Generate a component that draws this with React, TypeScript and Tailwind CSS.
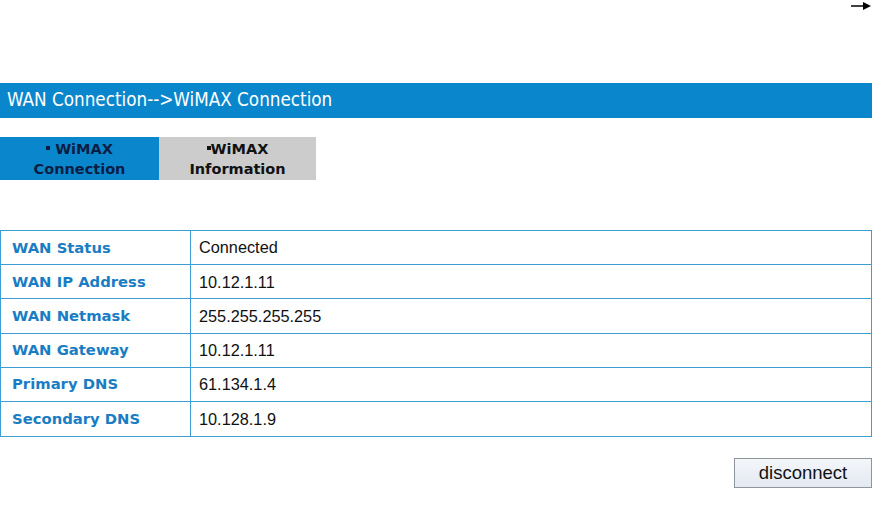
import React from 'react';

const ROWS: [string, string][] = [
  ['WAN Status', 'Connected'],
  ['WAN IP Address', '10.12.1.11'],
  ['WAN Netmask', '255.255.255.255'],
  ['WAN Gateway', '10.12.1.11'],
  ['Primary DNS', '61.134.1.4'],
  ['Secondary DNS', '10.128.1.9'],
];

export default function App() {
  return (
    <div className="w-[888px] h-[510px] bg-white relative overflow-hidden">
      {/* little arrow top-right */}
      <svg className="absolute left-[850px] top-0" width="24" height="12" viewBox="0 0 24 12">
        <line x1="1" y1="6" x2="15" y2="6" stroke="#000" strokeWidth="1.5" />
        <polygon points="13,2 21,6 13,10" fill="#000" />
      </svg>

      <div className="w-[872px] pt-[83px]">
        <div
          className="h-[35px] bg-[#0a87cc] flex items-center pl-[7px] text-white text-[18.7px]"
          style={{ fontFamily: '"DejaVu Sans Condensed", "DejaVu Sans", sans-serif' }}
        >
          WAN Connection--&gt;WiMAX Connection
        </div>

        <div
          className="mt-[19px] flex h-[43px] text-[14.5px] font-bold leading-[20px] text-center"
          style={{ fontFamily: '"DejaVu Sans", Verdana, sans-serif' }}
        >
          <div className="w-[159px] bg-[#0a87cc] text-[#0c1d45] flex flex-col justify-center">
            <span>
              <span className="inline-block w-[4px] h-[4px] bg-[#0c1d45] align-[4px]" /> WiMAX
            </span>
            <span>Connection</span>
          </div>
          <div className="w-[157px] bg-[#cccccc] text-[#111] flex flex-col justify-center">
            <span>
              <span className="inline-block w-[4px] h-[4px] bg-[#111] align-[4px]" />WiMAX
            </span>
            <span>Information</span>
          </div>
        </div>

        <div className="mt-[50px] border border-[#3d9ed6]">
          {ROWS.map(([k, v], i) => (
            <div
              key={k}
              className={`flex h-[34.2px] ${i < ROWS.length - 1 ? 'border-b border-[#3d9ed6]' : ''}`}
            >
              <div
                className="w-[190px] border-r border-[#3d9ed6] pl-[11px] flex items-center text-[14.8px] font-bold text-[#1a7dc4]"
                style={{ fontFamily: '"DejaVu Sans", Verdana, sans-serif' }}
              >
                {k}
              </div>
              <div
                className="flex-1 pl-[8px] flex items-center text-[16.3px] text-[#111]"
                style={{ fontFamily: '"Liberation Sans", Arial, sans-serif' }}
              >
                {v}
              </div>
            </div>
          ))}
        </div>

        <div className="flex justify-end mt-[21px]">
          <button
            className="w-[138px] h-[30px] border border-[#8e959e] bg-gradient-to-b from-[#f4f6f9] to-[#e3e9f2] text-[18.5px] text-[#111] flex items-center justify-center"
            style={{ fontFamily: '"Liberation Sans", Arial, sans-serif' }}
          >
            disconnect
          </button>
        </div>
      </div>
    </div>
  );
}
